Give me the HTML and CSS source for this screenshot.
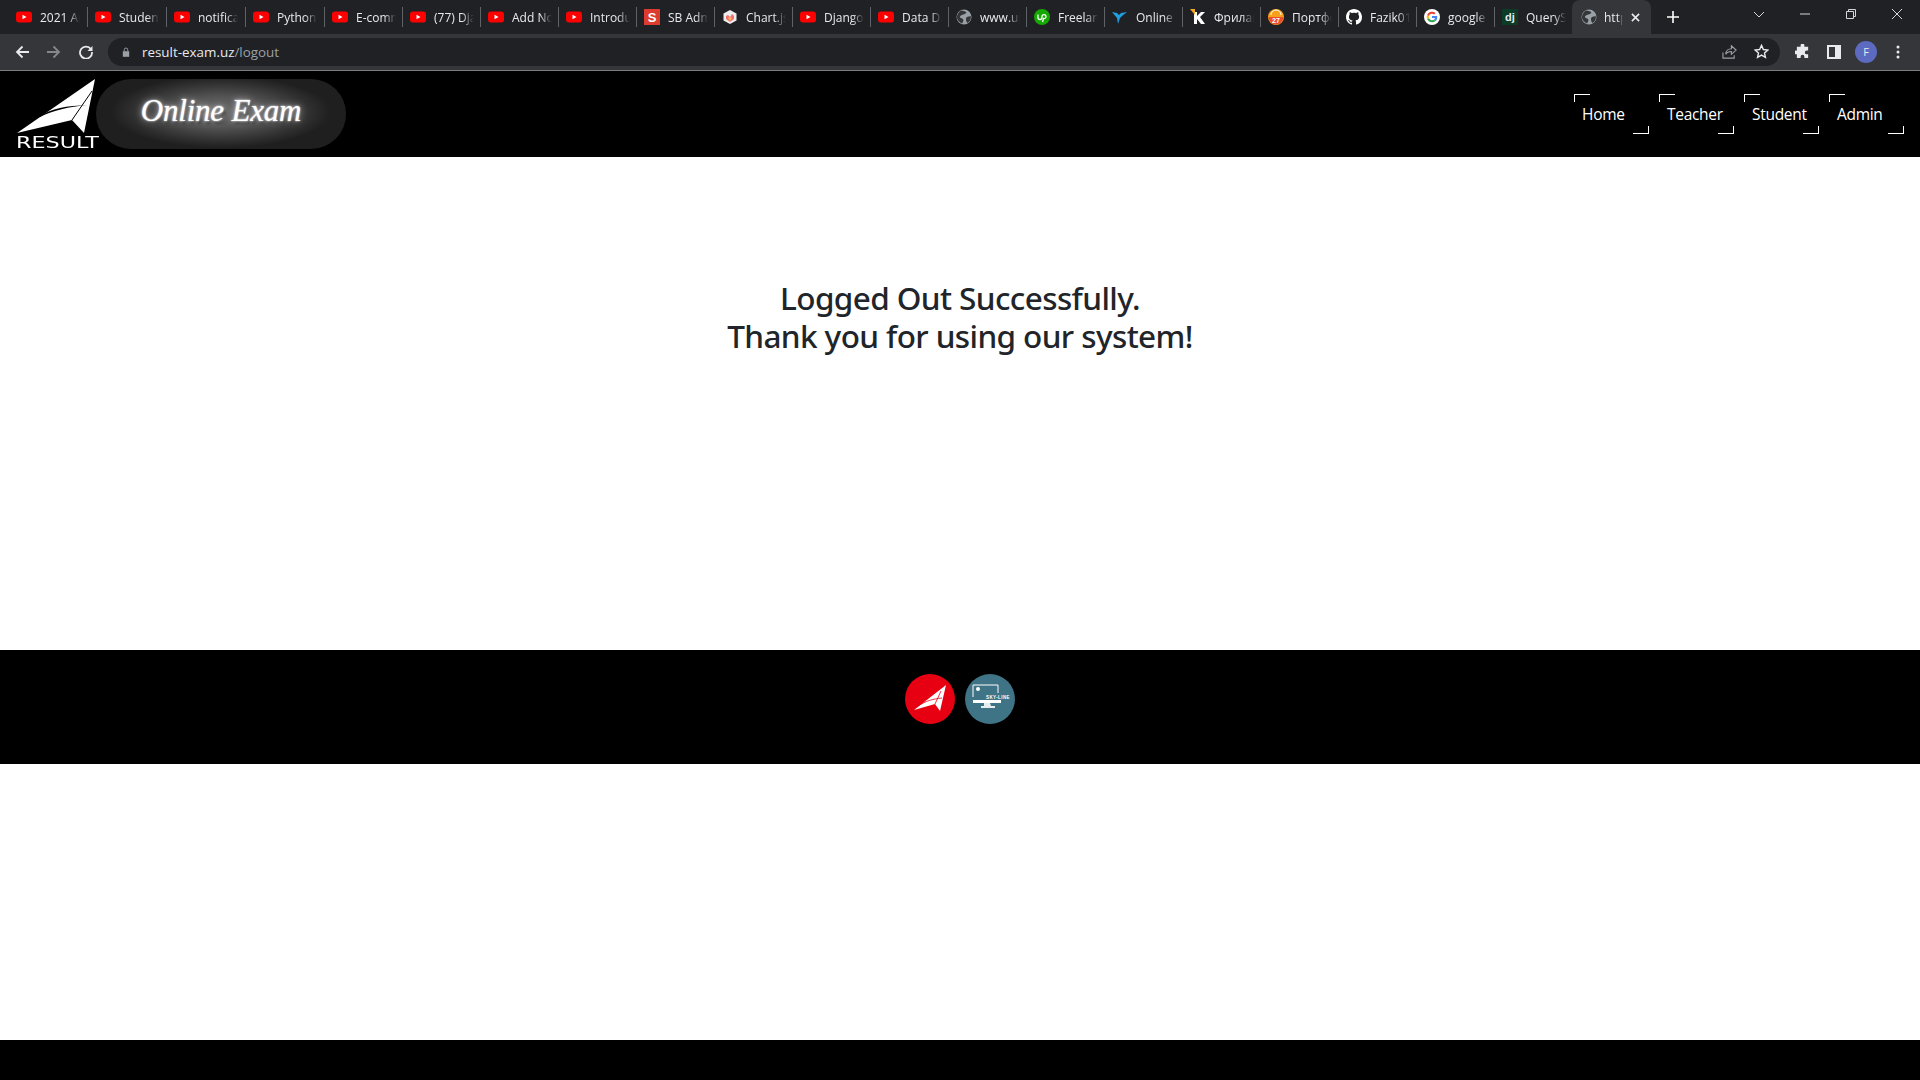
FILE: index.html
```html
<!DOCTYPE html>
<html lang="en">
<head>
<meta charset="utf-8">
<title>Online Exam</title>
<link rel="stylesheet" href="styles.css">
</head>
<body>
<svg class="defs" width="0" height="0" aria-hidden="true">
  <symbol id="yt" viewBox="0 0 16 16"><rect x="0" y="2.500" width="16" height="11" rx="3" fill="#f00"/><path d="M6.500 5.700v4.600L10.500 8z" fill="#fff"/></symbol>
  <symbol id="globe" viewBox="0 0 16 16"><circle cx="8" cy="8" r="7.500" fill="#9aa0a6"/><path d="M5 1.500c2 .5 4 .5 5 1.500s-1 2-2.500 2.500S4.500 6 4 7.500 6 9 7 10s0 3-1 4.500C3 13 1 11 .8 8 1.500 5 3 2.500 5 1.500zM11 8c1.500-.5 3-1 4-.5 0 2.500-1 5-3.500 6.500-1-1-1.500-2-1.500-3s0-2.500 1-3z" fill="#35363a"/></symbol>
</svg>

<header class="chrome">
  <div class="tabstrip">
    <div class="tab"><svg class="fav"><use href="#yt"/></svg><span class="label">2021 Ar</span></div>
    <div class="tab"><svg class="fav"><use href="#yt"/></svg><span class="label">Student</span></div>
    <div class="tab"><svg class="fav"><use href="#yt"/></svg><span class="label">notifica</span></div>
    <div class="tab"><svg class="fav"><use href="#yt"/></svg><span class="label">Python</span></div>
    <div class="tab"><svg class="fav"><use href="#yt"/></svg><span class="label">E-comm</span></div>
    <div class="tab"><svg class="fav"><use href="#yt"/></svg><span class="label">(77) Dja</span></div>
    <div class="tab"><svg class="fav"><use href="#yt"/></svg><span class="label">Add No</span></div>
    <div class="tab"><svg class="fav"><use href="#yt"/></svg><span class="label">Introdu</span></div>
    <div class="tab"><svg class="fav" viewBox="0 0 16 16"><rect width="16" height="16" fill="#dd3b2f"/><text x="8" y="12.500" class="fav-s">S</text></svg><span class="label">SB Adm</span></div>
    <div class="tab"><svg class="fav" viewBox="0 0 16 16"><path d="M8 1l6.500 3.500v7L8 15l-6.500-3.500v-7z" fill="#eee"/><path d="M4 7l2-1 2 2 2-3 2 2v3l-4 3-4-3z" fill="#f27173"/><path d="M6 9l2-1 2 1-2 3z" fill="#fdb45c"/></svg><span class="label">Chart.js</span></div>
    <div class="tab"><svg class="fav"><use href="#yt"/></svg><span class="label">Django</span></div>
    <div class="tab"><svg class="fav"><use href="#yt"/></svg><span class="label">Data Da</span></div>
    <div class="tab"><svg class="fav"><use href="#globe"/></svg><span class="label">www.up</span></div>
    <div class="tab"><svg class="fav" viewBox="0 0 16 16"><circle cx="8" cy="8" r="8" fill="#14a800"/><path d="M4 5.500v3a2 2 0 0 0 4 0V7.500a2 2 0 1 1 1.500 2L8.500 13" fill="none" stroke="#fff" stroke-width="1.300"/></svg><span class="label">Freelan</span></div>
    <div class="tab"><svg class="fav" viewBox="0 0 16 16"><path d="M0 3l5 1 2 2 2-2 6-1-5 4-2 2-2 6-1-6z" fill="#1f9fe0"/></svg><span class="label">Online</span></div>
    <div class="tab"><svg class="fav" viewBox="0 0 16 16"><path d="M4 3h3v4l4-4h4l-5 5 5 7h-4L7 10v5H4z" fill="#fff"/><path d="M0 0h5v6z" fill="#f5a623"/></svg><span class="label">Фрилан</span></div>
    <div class="tab"><svg class="fav" viewBox="0 0 16 16"><circle cx="8" cy="8" r="8" fill="#f7a11a"/><path d="M.5 8h15a7.500 7.500 0 0 1-15 0z" fill="#ea4e2d"/><path d="M3 6a5 5 0 0 1 10 0" fill="none" stroke="#fff" stroke-width="1"/><text x="8" y="13.500" class="fav-27">27</text></svg><span class="label">Портфо</span></div>
    <div class="tab"><svg class="fav" viewBox="0 0 16 16"><path fill="#fff" d="M8 0C3.580 0 0 3.580 0 8c0 3.540 2.290 6.530 5.470 7.590.4.070.55-.17.55-.38 0-.19-.01-.82-.01-1.490-2.010.37-2.530-.49-2.690-.94-.09-.23-.48-.94-.82-1.130-.28-.15-.68-.52-.01-.53.630-.01 1.080.58 1.230.82.720 1.210 1.870.87 2.330.66.070-.52.280-.87.510-1.070-1.780-.2-3.640-.89-3.640-3.950 0-.87.310-1.590.820-2.150-.08-.2-.36-1.020.08-2.120 0 0 .67-.21 2.200.82.640-.18 1.320-.27 2-.27s1.360.09 2 .27c1.530-1.040 2.200-.82 2.200-.82.440 1.100.16 1.920.08 2.120.51.560.82 1.270.82 2.150 0 3.070-1.870 3.750-3.650 3.950.29.250.54.730.54 1.480 0 1.070-.01 1.930-.01 2.200 0 .21.150.46.550.38A8.010 8.010 0 0 0 16 8c0-4.420-3.580-8-8-8z"/></svg><span class="label">Fazik01</span></div>
    <div class="tab"><svg class="fav" viewBox="0 0 16 16"><circle cx="8" cy="8" r="8" fill="#fff"/><path d="M13.200 8.200c0-.4 0-.7-.1-1.100H8v2h3a2.500 2.500 0 0 1-1.100 1.700l1.700 1.300c1-.9 1.600-2.300 1.600-3.900z" fill="#4285f4"/><path d="M8 13.300c1.400 0 2.700-.5 3.600-1.300l-1.700-1.300c-.5.300-1.100.5-1.900.5-1.400 0-2.600-1-3-2.200L3.200 10.300A5.300 5.300 0 0 0 8 13.300z" fill="#34a853"/><path d="M5 9a3 3 0 0 1 0-2L3.200 5.700a5.300 5.300 0 0 0 0 4.600z" fill="#fbbc05"/><path d="M8 4.800c.8 0 1.500.3 2.100.8l1.500-1.500A5.300 5.300 0 0 0 3.200 5.700L5 7c.4-1.300 1.600-2.200 3-2.200z" fill="#ea4335"/></svg><span class="label">google</span></div>
    <div class="tab"><svg class="fav" viewBox="0 0 16 16"><rect width="16" height="16" fill="#0c3c26"/><text x="8" y="12" class="fav-dj">dj</text></svg><span class="label">QueryS</span></div>
    <div class="tab active"><svg class="fav"><use href="#globe"/></svg><span class="label">http</span><svg class="tab-x" viewBox="0 0 10 10"><path d="M1 1l8 8M9 1l-8 8"/></svg></div>
    <svg class="newtab" viewBox="0 0 12 12"><path d="M6 0v12M0 6h12"/></svg>
    <div class="winctl">
      <svg class="wbtn" viewBox="0 0 12 12"><path d="M1 4l5 5 5-5"/></svg>
      <svg class="wbtn" viewBox="0 0 12 12"><path d="M1 6h10"/></svg>
      <svg class="wbtn" viewBox="0 0 12 12"><path d="M1.500 3.500h7v7h-7zM3.500 3.500v-2h7v7h-2"/></svg>
      <svg class="wbtn" viewBox="0 0 12 12"><path d="M1 1l10 10M11 1L1 11"/></svg>
    </div>
  </div>
  <div class="toolbar">
    <svg class="tool" viewBox="0 0 14 14"><path class="ln" d="M14 7H2M7.500 1.500L2 7l5.500 5.500"/></svg>
    <svg class="tool off" viewBox="0 0 14 14"><path class="ln" d="M0 7h12M6.500 1.500L12 7l-5.500 5.500"/></svg>
    <svg class="tool" viewBox="0 0 14 14"><path class="ln" d="M12 4.200A6 6 0 1 0 13 7"/><path class="sol" d="M13.500 1v5h-5z"/></svg>
    <div class="omnibox">
      <svg class="lock" viewBox="0 0 10 12"><path class="sol dim" d="M1 5h8v7H1z"/><path class="ln thin dimline" d="M2.800 5V3.200a2.200 2.200 0 0 1 4.400 0V5"/></svg>
      <span class="url">result-exam.uz<span class="url-path">/logout</span></span>
      <svg class="omni-ic share" viewBox="0 0 16 16"><path class="ln thin dimline" d="M1 9v6h12v-3M4 11c0-4 3-6 6-6V2l5 4.500L10 11V8C7 8 5 9 4 11z"/></svg>
      <svg class="omni-ic" viewBox="0 0 16 16"><path class="ln star" d="M8 1.500l2 4.400 4.800.5-3.600 3.200 1 4.700L8 11.900l-4.200 2.400 1-4.700L1.200 6.400 6 5.900z"/></svg>
    </div>
    <svg class="ext" viewBox="0 0 16 16"><path class="sol" d="M6 1.500a2 2 0 0 1 4 0V3h4v4h-1.500a2 2 0 0 0 0 4H14v4h-4v-1.500a2 2 0 0 0-4 0V15H2v-4H.8a2 2 0 0 1 0-4H2V3h4z"/></svg>
    <svg class="panel" viewBox="0 0 14 14"><path class="sol" fill-rule="evenodd" d="M0 0h14v14H0zM2 2v10h6V2z"/></svg>
    <div class="avatar">F</div>
    <svg class="dots" viewBox="0 0 4 14"><circle cx="2" cy="2" r="1.500"/><circle cx="2" cy="7" r="1.500"/><circle cx="2" cy="12" r="1.500"/></svg>
  </div>
</header>

<nav class="navbar">
  <div class="brand">
    <div class="logo">
      <svg class="plane" viewBox="0 0 80 55"><path d="M79 0L1 54l55-13 12 13z" fill="#fff"/><path d="M22 38C36 29 50 27 72 26 52 28 38 31 24 38z" fill="#000"/><path d="M76 12L56 41" fill="none" stroke="#000" stroke-width="1"/></svg>
      <span class="logo-text">RESULT</span>
    </div>
    <div class="pill"><span class="neon">Online Exam</span></div>
  </div>
  <ul class="menu">
    <li><a class="menu-link" href="#">Home</a></li>
    <li><a class="menu-link" href="#">Teacher</a></li>
    <li><a class="menu-link" href="#">Student</a></li>
    <li><a class="menu-link" href="#">Admin</a></li>
  </ul>
</nav>

<main class="content">
  <h2 class="message">Logged Out Successfully.<br>Thank you for using our system!</h2>
</main>

<footer class="footer">
  <div class="badge badge-red">
    <svg class="badge-plane" viewBox="0 0 32 26"><path d="M32 0L0 25l21-6 5 7z" fill="#fff"/><path d="M4 21c8-5 14-7 24-8" fill="none" stroke="#e60012" stroke-width=".8"/><path d="M27 6l-6 13" fill="none" stroke="#e60012" stroke-width=".8"/></svg>
  </div>
  <div class="badge badge-teal">
    <svg class="badge-mon" viewBox="0 0 50 50"><path d="M8 23V11h25v8" fill="none" stroke="#fff" stroke-width="1"/><path d="M8 26h28v3H8z" fill="#fff"/><path d="M19 29h6l1 3h4v2H16v-2h3z" fill="#e4eef0"/><text x="21" y="24.500" class="sky">SKY-LINE</text><circle cx="13" cy="15" r="2" fill="#fff"/></svg>
  </div>
</footer>

<div class="blank"></div>
<div class="taskbar"></div>
</body>
</html>
```

FILE: styles.css
```css
* { box-sizing: border-box; }
html, body { margin: 0; height: 100%; }
body {
  display: flex;
  flex-direction: column;
  height: 1080px;
  overflow: hidden;
  background: #fff;
  font-family: "Open Sans", "Noto Sans", sans-serif;
}
.defs { display: block; height: 0; }

/* browser chrome */
.chrome { flex: none; }
.tabstrip {
  display: flex;
  align-items: center;
  height: 34px;
  padding-left: 9px;
  background: #202124;
}
.tab {
  display: flex;
  align-items: center;
  gap: 8px;
  flex: none;
  width: 78px;
  height: 34px;
  padding-left: 7px;
  position: relative;
  overflow: hidden;
}
.tab:nth-child(-n+4) { width: 79px; }
.tab::after {
  content: "";
  position: absolute;
  right: 0;
  top: 7px;
  width: 1px;
  height: 20px;
  background: #5f6368;
}
.tab:nth-child(20)::after { display: none; }
.fav { width: 16px; height: 16px; flex: none; }
.fav-s { font: 700 13px "Liberation Sans", sans-serif; fill: #fff; text-anchor: middle; }
.fav-27 { font: 700 7px "Liberation Sans", sans-serif; fill: #fff; text-anchor: middle; }
.fav-dj { font: 700 11px "Liberation Sans", sans-serif; fill: #e8eaed; text-anchor: middle; }
.label {
  flex: none;
  width: 40px;
  overflow: hidden;
  white-space: nowrap;
  font-size: 12px;
  color: #e8eaed;
  -webkit-mask-image: linear-gradient(90deg, #000 70%, transparent 100%);
  mask-image: linear-gradient(90deg, #000 70%, transparent 100%);
}
.tab.active {
  width: 79px;
  margin-left: -1px;
  padding-left: 9px;
  gap: 7px;
  background: #35363a;
  border-radius: 8px 8px 0 0;
}
.tab.active::after { display: none; }
.tab.active .label { width: 19px; }
.tab-x { width: 9px; height: 9px; margin-left: 1px; flex: none; fill: none; stroke: #e8eaed; stroke-width: 1.800; }
.newtab { width: 12px; height: 12px; margin-left: 16px; flex: none; fill: none; stroke: #fff; stroke-width: 1.600; }
.winctl {
  display: flex;
  align-items: center;
  gap: 34px;
  margin-left: auto;
  padding-right: 17px;
  padding-bottom: 6px;
}
.wbtn { width: 12px; height: 12px; fill: none; stroke: #d5d6d8; stroke-width: 1; }

.toolbar {
  display: flex;
  align-items: center;
  height: 37px;
  padding: 0 0 1px 15px;
  background: #35363a;
  border-bottom: 1px solid #7b7c80;
}
.tool { width: 14px; height: 14px; margin-right: 18px; flex: none; }
.tool.off { opacity: .45; }
.ln { fill: none; stroke: #e8eaed; stroke-width: 1.800; }
.ln.thin { stroke-width: 1.200; }
.ln.star { stroke-width: 1.500; }
.sol { fill: #e8eaed; stroke: none; }
.sol.dim { fill: #9aa0a6; }
.ln.dimline { stroke: #9aa0a6; }
.lock { width: 8px; height: 10px; flex: none; margin: 0 12px 0 14px; }
.omnibox {
  display: flex;
  align-items: center;
  width: 1672px;
  height: 28px;
  margin-left: -3px;
  border-radius: 14px;
  background: #202124;
  flex: none;
}
.url { font-size: 13.400px; color: #e8eaed; white-space: nowrap; }
.url-path { color: #9aa0a6; }
.omni-ic { width: 15px; height: 15px; flex: none; margin-right: 11px; }
.share { margin-left: auto; margin-right: 17px; }
.ext { width: 15px; height: 15px; flex: none; margin-left: 15px; }
.panel { width: 14px; height: 14px; flex: none; margin-left: 17px; }
.avatar {
  display: flex;
  align-items: center;
  justify-content: center;
  width: 22px;
  height: 22px;
  margin-left: 14px;
  flex: none;
  border-radius: 50%;
  background: #5c6bc0;
  color: #e8eaed;
  font-size: 11px;
}
.dots { width: 4px; height: 14px; margin-left: 19px; flex: none; fill: #e8eaed; }

/* site navbar */
.navbar {
  flex: none;
  display: flex;
  align-items: center;
  justify-content: space-between;
  height: 86px;
  padding: 8px 16px 8px 16px;
  background: #000;
}
.brand { display: flex; align-items: center; }
.logo { display: flex; flex-direction: column; width: 80px; height: 70px; }
.plane { display: block; width: 80px; height: 55px; flex: none; }
.logo-text {
  display: block;
  margin-top: 2px;
  font: 400 16.500px/13px "DejaVu Sans", sans-serif;
  color: #fff;
  white-space: nowrap;
  transform: scaleX(1.350);
  transform-origin: left center;
}
.pill {
  display: flex;
  align-items: center;
  justify-content: center;
  width: 250px;
  height: 70px;
  border-radius: 35px;
  background: radial-gradient(ellipse 110px 36px at 50% 47%, #6a6a6a 0%, #565656 40%, #303030 80%, #1f1f1f 100%);
}
.neon {
  font: italic 400 31px "Liberation Serif", serif;
  letter-spacing: -.2px;
  color: #fff;
  text-shadow: 0 0 2px #fff, 0 0 7px #ccc, 2px 3px 3px #2a2a2a;
  white-space: nowrap;
  position: relative;
  top: -3px;
}
.menu { display: flex; gap: 10px; margin: 0; padding: 0; list-style: none; }
.menu-link {
  display: block;
  position: relative;
  width: 75px;
  height: 40px;
  padding: 8px 0 0 8px;
  color: #fff;
  font-size: 15.500px;
  letter-spacing: -.3px;
  line-height: 24px;
  text-decoration: none;
}
.menu-link::before,
.menu-link::after {
  content: "";
  position: absolute;
  width: 15px;
  height: 7px;
}
.menu-link::before { left: 0; top: 0; border-left: 1.500px solid #fff; border-top: 1.500px solid #fff; }
.menu-link::after { right: 0; bottom: 0; border-right: 1.500px solid #fff; border-bottom: 1.500px solid #fff; }

/* content */
.content { flex: none; height: 493px; padding-top: 122px; background: #fff; }
.message {
  margin: 0;
  text-align: center;
  font-family: "Noto Sans", "Open Sans", sans-serif;
  font-size: 31.500px;
  font-weight: 500;
  letter-spacing: -.6px;
  line-height: 38.400px;
  color: #212529;
}

/* footer */
.footer {
  flex: none;
  display: flex;
  justify-content: center;
  gap: 10px;
  height: 114px;
  padding-top: 24px;
  background: #000;
}
.badge { display: flex; align-items: center; justify-content: center; width: 50px; height: 50px; border-radius: 50%; }
.badge-red { background: #e60012; }
.badge-teal { background: #3f7386; }
.badge-plane { width: 32px; height: 26px; margin-top: -2px; }
.badge-mon { width: 50px; height: 50px; }
.sky { font: 700 4.500px "Liberation Sans", sans-serif; fill: #fff; letter-spacing: .4px; }

.blank { flex: 1; background: #fff; }
.taskbar { flex: none; height: 40px; background: #000; }
```
